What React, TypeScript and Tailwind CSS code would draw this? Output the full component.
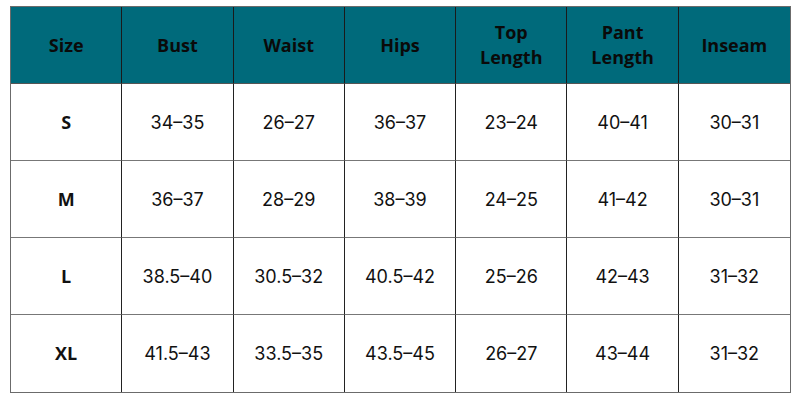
import React from "react";

const headers = ["Size", "Bust", "Waist", "Hips", "Top\nLength", "Pant\nLength", "Inseam"];
const rows = [
  ["S", "34–35", "26–27", "36–37", "23–24", "40–41", "30–31"],
  ["M", "36–37", "28–29", "38–39", "24–25", "41–42", "30–31"],
  ["L", "38.5–40", "30.5–32", "40.5–42", "25–26", "42–43", "31–32"],
  ["XL", "41.5–43", "33.5–35", "43.5–45", "26–27", "43–44", "31–32"],
];

export default function App() {
  return (
    <div className="w-[800px] h-[400px] bg-white pt-[6px] pl-[10px]">
      <div className="w-[781px] border border-[#6b6b6b] grid grid-cols-7">
        {headers.map((h, i) => (
          <div
            key={h}
            className={`h-[77px] bg-[#006a7b] flex items-center justify-center text-center text-[18px] leading-[25px] font-bold text-[#0a0a0a] whitespace-pre-line border-b border-[#555] ${i < 6 ? "border-r border-r-[#1a1a1a]" : ""}`}
            style={{ fontFamily: "'Open Sans', sans-serif" }}
          >
            {h}
          </div>
        ))}
        {rows.map((r, ri) =>
          r.map((c, ci) => (
            <div
              key={ri + "-" + ci}
              className={`h-[77px] flex items-center justify-center text-[18px] text-[#111] ${ci === 0 ? "font-bold" : ""} ${ri < 3 ? "border-b border-[#777]" : ""} ${ci < 6 ? "border-r border-r-[#222]" : ""}`}
              style={{ fontFamily: ci === 0 ? "'Open Sans', sans-serif" : "Inter, sans-serif" }}
            >
              {c}
            </div>
          ))
        )}
      </div>
    </div>
  );
}
